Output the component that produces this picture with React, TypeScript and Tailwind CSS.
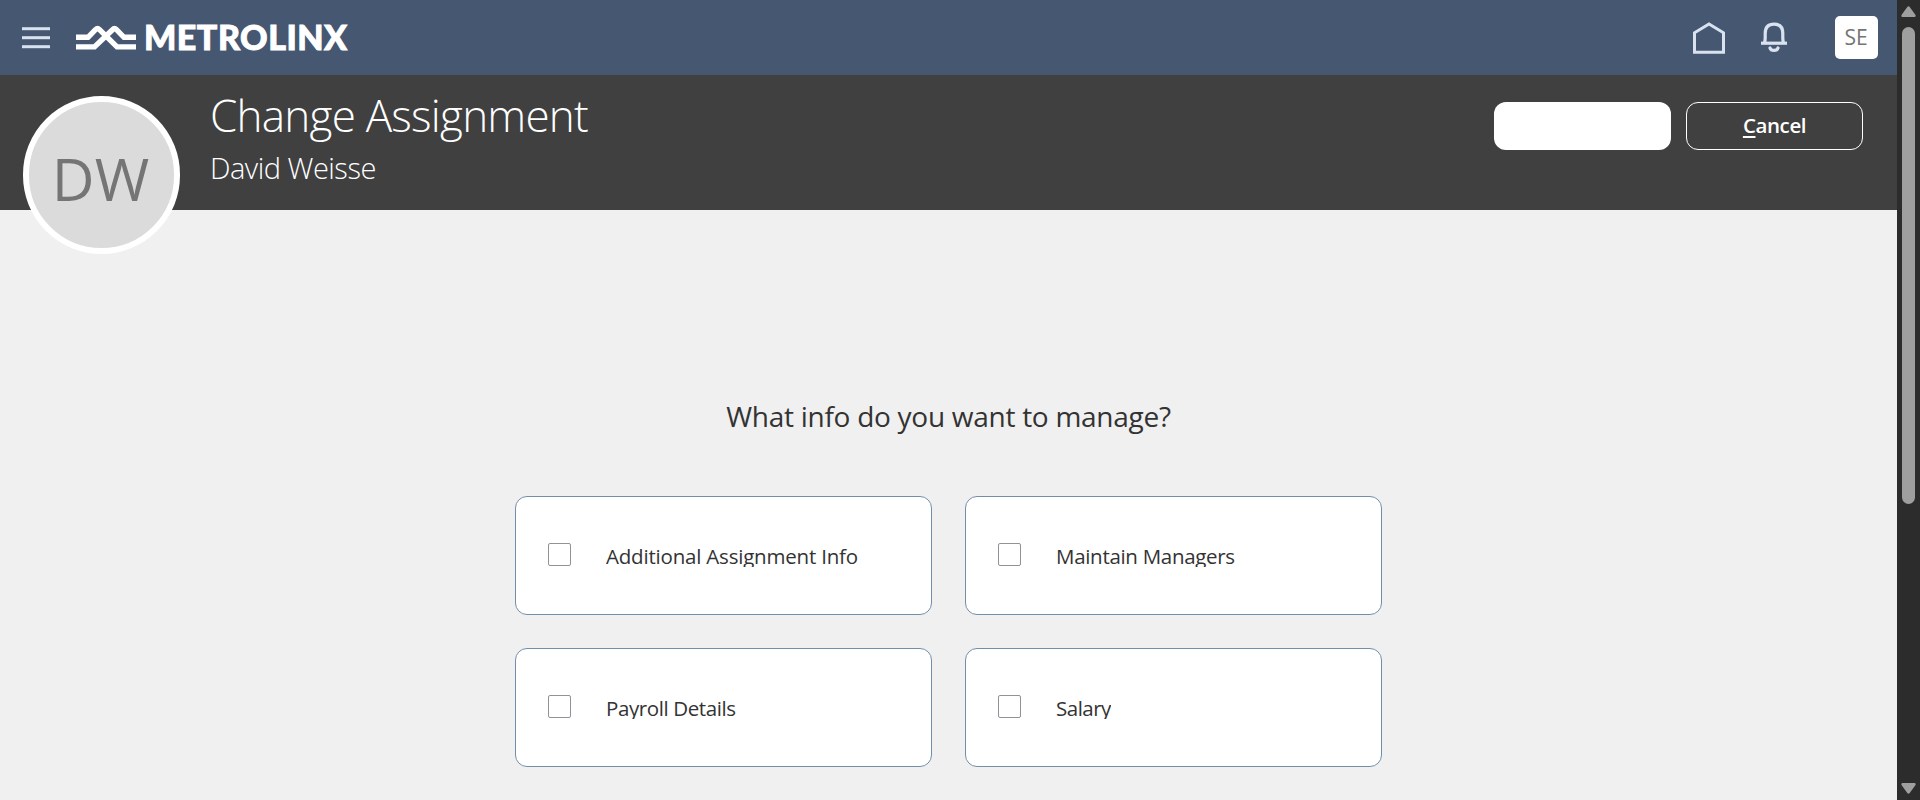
import React from "react";

const cards = ["Additional Assignment Info", "Maintain Managers", "Payroll Details", "Salary"];
const spacing = ["tracking-[-0.2px]", "tracking-[-0.3px]", "tracking-[-0.4px]", "tracking-[-0.5px]"];

function TopBar() {
  return (
    <header className="flex h-[75px] shrink-0 items-center bg-[#465772] pl-[22px] pr-[19px]">
      <svg className="h-[22px] w-[28px]" viewBox="0 0 28 22" fill="#d9e3f0">
        <rect y="0.2" width="28" height="3" />
        <rect y="9.2" width="28" height="3" />
        <rect y="18.2" width="28" height="3" />
      </svg>
      <svg className="ml-[26px] h-[26px] w-[60px]" viewBox="0 0 60 26" fill="none" stroke="#fff" strokeWidth="5.4">
        <path d="M0 12.3H12L19.5 4.7Q21.5 2.7 23.5 4.7L41 21.9H60" />
        <path d="M0 21.9H18.5L36.5 4.7Q38.5 2.7 40.5 4.7L48 12.3H60" />
      </svg>
      <span className="ml-[8px] whitespace-nowrap pb-[2px] font-['Lato',sans-serif] text-[34px] leading-[40px] font-black tracking-[0.5px] text-white [-webkit-text-stroke:0.9px_#fff]">METROLINX</span>
      <div className="ml-auto flex items-center">
        <svg className="h-[32px] w-[32px]" viewBox="0 0 32 32" fill="none" stroke="#d9e3f0" strokeWidth="3">
          <path d="M1.5 30.2V10.8L16 1.9L30.5 10.8V30.2Z" />
        </svg>
        <svg className="ml-[36px] h-[32px] w-[26px]" viewBox="0 0 26 32" fill="none" stroke="#d9e3f0" strokeWidth="3.2">
          <path d="M0 21.2H26" />
          <path d="M3.4 21C4.5 19 4.2 15 4.2 11.5C4.2 5.5 7.5 2.2 13 2.2S21.8 5.5 21.8 11.5C21.8 15 21.5 19 22.6 21" />
          <path d="M9 26C10 29.2 16 29.2 17 26" strokeLinecap="round" />
        </svg>
        <div className="ml-[48px] flex h-[43px] w-[43px] items-center justify-center rounded-[5px] bg-white pr-px font-['Open_Sans',sans-serif] text-[21px] text-[#757575]">SE</div>
      </div>
    </header>
  );
}

function TitleBar() {
  return (
    <section className="flex h-[135px] shrink-0 items-start bg-[#404040] pl-[23px] pr-[34px] pt-[21px] text-white">
      <div className="z-10 flex h-[158px] w-[157px] shrink-0 items-center justify-center rounded-full border-[6px] border-white bg-[#dbdbdb] pt-[6px] pr-[2px] text-[59px] leading-none text-[#757575]">DW</div>
      <div className="ml-[30px] flex flex-col whitespace-nowrap font-light">
        <h1 className="-mt-[3px] h-[55px] text-[44px] leading-[44px] tracking-[-0.76px]">Change Assignment</h1>
        <p className="text-[29px] leading-[40px] tracking-[-0.5px]">David Weisse</p>
      </div>
      <div className="ml-auto flex gap-[15px] pt-[6px]">
        <button className="h-[48px] w-[177px] rounded-[12px] bg-white" aria-label="Continue" />
        <button className="h-[48px] w-[177px] rounded-[12px] border border-white pb-px text-[20.5px] font-semibold tracking-[-0.4px]">
          <span className="underline decoration-2 underline-offset-[3px]">C</span>ancel
        </button>
      </div>
    </section>
  );
}

function Scrollbar() {
  return (
    <div className="flex w-[23px] flex-col items-center bg-[#2c2c2c] pt-[6px]">
      <svg className="h-[11px] w-[15px]" viewBox="0 0 15 11" fill="#9f9f9f"><path d="M6.3 1Q7.5 -.4 8.7 1L14.5 9Q15 11 13.5 11H1.5Q0 11 .5 9Z" /></svg>
      <div className="mt-[10px] h-[477px] w-[13px] rounded-full bg-[#9f9f9f]" />
      <svg className="mt-[279px] h-[11px] w-[15px]" viewBox="0 0 15 11" fill="#9f9f9f"><path d="M6.3 10Q7.5 11.4 8.7 10L14.5 2Q15 0 13.5 0H1.5Q0 0 .5 2Z" /></svg>
    </div>
  );
}

export default function App() {
  return (
    <div className="flex h-[800px] w-[1920px] overflow-hidden bg-[#f0f0f0] font-['Open_Sans','Noto_Sans',sans-serif]">
      <div className="flex w-[1897px] flex-col">
        <TopBar />
        <TitleBar />
        <main className="flex flex-col items-center pt-[186px]">
          <h2 className="h-[100px] whitespace-nowrap text-[28px] leading-[40px] tracking-[-0.27px] text-[#333]">What info do you want to manage?</h2>
          <div className="grid grid-cols-[417px_417px] gap-[33px]">
            {cards.map((label, i) => (
              <label key={label} className="flex h-[119px] items-start rounded-[12px] border border-[#738fa8] bg-white pl-[32px] pt-[46px]">
                <input type="checkbox" className="h-[23px] w-[23px] shrink-0 appearance-none rounded-[2px] border border-[#8f9397] bg-white" />
                <span className={`ml-[35px] h-[24px] overflow-hidden whitespace-nowrap text-[20.5px] leading-[27px] text-[#333] ${spacing[i]}`}>{label}</span>
              </label>
            ))}
          </div>
        </main>
      </div>
      <Scrollbar />
    </div>
  );
}
